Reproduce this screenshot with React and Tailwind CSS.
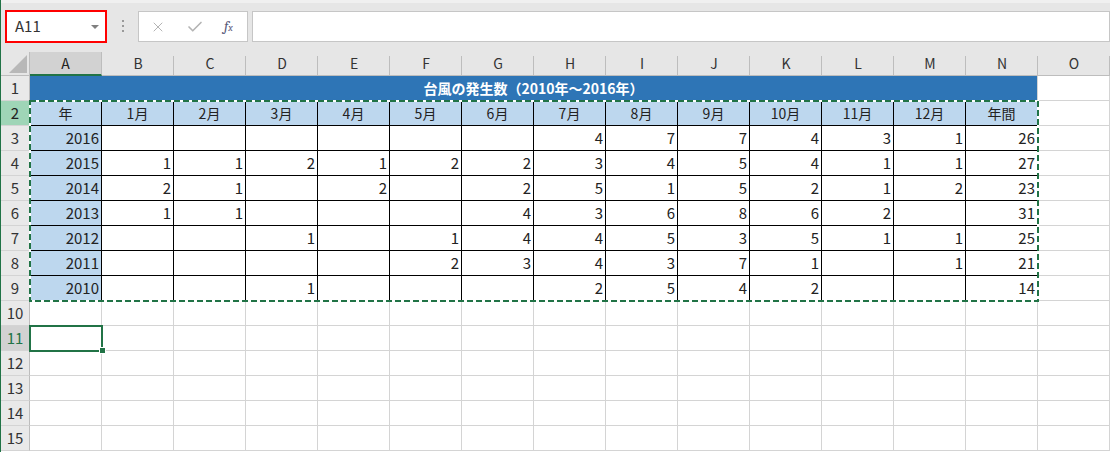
import { X, Check } from "lucide-react";

const COLS = ["A", "B", "C", "D", "E", "F", "G", "H", "I", "J", "K", "L", "M", "N", "O"];
const MONTHS = ["年", "1月", "2月", "3月", "4月", "5月", "6月", "7月", "8月", "9月", "10月", "11月", "12月", "年間"];

// year, Jan..Dec, total ("" = empty cell)
const DATA = [
  [2016, "", "", "", "", "", "", 4, 7, 7, 4, 3, 1, 26],
  [2015, 1, 1, 2, 1, 2, 2, 3, 4, 5, 4, 1, 1, 27],
  [2014, 2, 1, "", 2, "", 2, 5, 1, 5, 2, 1, 2, 23],
  [2013, 1, 1, "", "", "", 4, 3, 6, 8, 6, 2, "", 31],
  [2012, "", "", 1, "", 1, 4, 4, 5, 3, 5, 1, 1, 25],
  [2011, "", "", "", "", 2, 3, 4, 3, 7, 1, "", 1, 21],
  [2010, "", "", 1, "", "", "", 2, 5, 4, 2, "", "", 14],
];

function RowHeader({ n }) {
  const tone =
    n === 2
      ? "bg-[#9fd5b7] text-[#222]"
      : n === 11
      ? "bg-[#d2d2d2] text-[#217346]"
      : "bg-[#e9e9e9] text-[#333]";
  return (
    <div className={`h-[25px] flex items-center justify-center border-r border-b border-r-[#bdbdbd] border-b-[#d4d4d4] text-[15px] ${tone}`}>
      {n}
    </div>
  );
}

function Cell({ children, className = "" }) {
  return <div className={`h-[25px] flex items-center border-r border-b ${className}`}>{children}</div>;
}

export default function App() {
  const rows = [];

  // row 1 : merged title
  rows.push(<RowHeader key="h1" n={1} />);
  rows.push(
    <div
      key="t"
      className="col-span-14 h-[25px] bg-[#2e75b6] border-r border-b border-r-[#d4d4d4] border-b-black flex items-center justify-center text-white font-bold text-[14px]"
    >
      台風の発生数（2010年～2016年）
    </div>
  );
  rows.push(<Cell key="o1" className="border-[#d4d4d4]" />);

  // row 2 : month header
  rows.push(<RowHeader key="h2" n={2} />);
  MONTHS.forEach((m) =>
    rows.push(
      <Cell key={"m" + m} className="bg-[#bdd7ee] border-black justify-center text-[14px] text-[#222]">
        {m}
      </Cell>
    )
  );
  rows.push(<Cell key="o2" className="border-[#d4d4d4]" />);

  // rows 3-9 : data
  DATA.forEach((r, i) => {
    rows.push(<RowHeader key={"h" + (i + 3)} n={i + 3} />);
    r.forEach((v, j) =>
      rows.push(
        <Cell
          key={`d${i}-${j}`}
          className={`border-black justify-end pr-[2px] text-[15px] text-[#222] ${j === 0 ? "bg-[#bdd7ee]" : "bg-white"}`}
        >
          {v}
        </Cell>
      )
    );
    rows.push(<Cell key={"o" + i} className="border-[#d4d4d4]" />);
  });

  // rows 10-15 : empty
  for (let n = 10; n <= 15; n++) {
    rows.push(<RowHeader key={"h" + n} n={n} />);
    COLS.forEach((c) => rows.push(<Cell key={`e${n}${c}`} className="border-[#d4d4d4]" />));
  }

  return (
    <div
      className="relative w-[1110px] h-[452px] overflow-hidden bg-white border-l border-[#217346]"
      style={{ fontFamily: '"Noto Sans CJK JP", "Noto Sans", sans-serif' }}
    >
      {/* formula bar */}
      <div className="h-[52px] bg-[#e6e6e6] border-t-[3px] border-[#f0f0f0] flex items-start pt-[7px]">
        <div className="ml-[4px] w-[102px] h-[33px] border-2 border-[#ff0000] bg-white flex items-center justify-between pl-[8px] pr-[6px]">
          <span className="text-[15px] text-[#333]">A11</span>
          <span className="w-0 h-0 border-l-[4px] border-r-[4px] border-t-[4px] border-l-transparent border-r-transparent border-t-[#808080]" />
        </div>
        <div className="w-[2px] ml-[15px] mr-[14px] mt-[10px] flex flex-col gap-[3px] items-center">
          <span className="w-[2px] h-[2px] bg-[#999]" />
          <span className="w-[2px] h-[2px] bg-[#999]" />
          <span className="w-[2px] h-[2px] bg-[#999]" />
        </div>
        <div className="mt-[1px] w-[110px] h-[31px] bg-white border border-[#c6c6c6] flex items-center pl-[11px] gap-[20px]">
          <X size={16} strokeWidth={1.5} className="text-[#b4b4b4]" />
          <Check size={18} strokeWidth={2.2} className="text-[#b4b4b4]" />
          <span className="italic text-[15px] text-[#5a5a7a] font-serif leading-none">
            f<span className="text-[10px]">x</span>
          </span>
        </div>
        <div className="mt-[1px] ml-[4px] flex-1 h-[31px] bg-white border border-[#c6c6c6]" />
      </div>

      {/* grid */}
      <div className="grid grid-cols-[29px_repeat(15,72px)]">
        <div className="h-[24px] bg-[#e6e6e6] border-r border-b border-[#bdbdbd] flex items-end justify-end p-[2px]">
          <svg width="18" height="18" viewBox="0 0 18 18">
            <polygon points="18,0 18,18 0,18" fill="#b8b8b8" />
          </svg>
        </div>
        {COLS.map((c) => (
          <div
            key={c}
            className={`h-[24px] flex items-center justify-center text-[14px] relative ${
              c === "A"
                ? "bg-[#d2d2d2] text-[#222] border-b-2 border-[#217346] border-r border-r-[#bdbdbd]"
                : "bg-[#e6e6e6] text-[#333] border-b border-[#bdbdbd]"
            }`}
          >
            {c !== "A" && <span className="absolute right-0 top-[4px] bottom-0 w-px bg-[#bdbdbd]" />}
            {c}
          </div>
        ))}
        {rows}
      </div>

      {/* copy marquee */}
      <svg className="absolute left-[28px] top-[100px]" width="1010" height="202">
        <rect x="1" y="1" width="1008" height="200" fill="none" stroke="#ffffff" strokeWidth="2" />
        <rect x="1" y="1" width="1008" height="200" fill="none" stroke="#217346" strokeWidth="2" strokeDasharray="6 3" />
      </svg>

      {/* active cell A11 */}
      <div className="absolute left-[28px] top-[325px] w-[74px] h-[27px] border-2 border-[#217346]" />
      <div className="absolute left-[98px] top-[347px] w-[7px] h-[7px] bg-[#217346] border border-white" />
    </div>
  );
}
